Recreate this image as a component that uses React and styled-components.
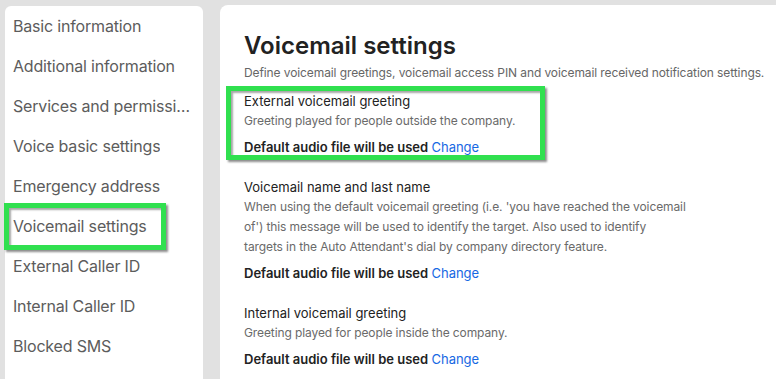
import React from 'react'
import styled, { createGlobalStyle } from 'styled-components'

const Global = createGlobalStyle`
  html, body {
    margin: 0;
    padding: 0;
    background: #e1e1e1;
    font-family: Inter, "Noto Sans", sans-serif;
    overflow: hidden;
  }
`;

const Page = styled.div`
    display: flex;
    align-items: flex-start;
    gap: 17px;
    height: 379px;
    padding: 5px 0 0 5px;
    box-sizing: border-box;
`;

const Sidebar = styled.ul`
    list-style: none;
    margin: 1px 0 0 0;
    padding: 0;
    width: 198px;
    height: 400px;
    background: #fff;
    border-radius: 6px 6px 0 0;
    flex-shrink: 0;
`;

const SideItem = styled.li`
    position: relative;
    height: 40px;
    display: flex;
    align-items: center;
    padding-left: 8px;
    font-size: 16px;
    letter-spacing: -0.18px;
    color: #5c5c5c;
    white-space: nowrap;
`;

const Clip = styled.span`
    display: block;
    max-width: 178px;
    overflow: hidden;
    text-overflow: ellipsis;
`;

const Highlight = styled.span`
    position: absolute;
    left: ${p => p.$left}px;
    top: ${p => p.$top}px;
    width: ${p => p.$w}px;
    height: ${p => p.$h}px;
    border: 5px solid #30e04f;
    box-sizing: border-box;
    box-shadow: 2px 2px 2px rgba(0,0,0,0.45), inset 2px 2px 2px rgba(0,0,0,0.35);
    pointer-events: none;
`;

const Main = styled.main`
    flex: 1;
    height: 400px;
    background: #fff;
    border-radius: 8px 0 0 0;
    padding: 26px 0 0 24px;
    box-sizing: border-box;
`;

const Title = styled.h1`
    margin: 0;
    font-size: 24px;
    font-weight: 600;
    color: #222;
    line-height: 30px;
`;

const Lead = styled.p`
    margin: 4px 0 10px;
    font-size: 12px;
    letter-spacing: -0.1px;
    color: #666;
    line-height: 16px;
    white-space: nowrap;
`;

const Section = styled.section`
    position: relative;
    margin-bottom: 20px;
`;

const Label = styled.div`
    font-size: 13px;
    color: #222;
    line-height: 20px;
`;

const Desc = styled.div`
    font-size: 12px;
    letter-spacing: -0.1px;
    color: #6a6a6a;
    line-height: 20px;
    max-width: 442px;
`;

const Audio = styled.div`
    margin-top: 6px;
    font-size: 13px;
    line-height: 20px;
    font-weight: 600;
    color: #222;
`;

const ChangeLink = styled.a`
    font-weight: 400;
    color: #1668e3;
    text-decoration: none;
    cursor: pointer;
`;

const menu = [
    'Basic information',
    'Additional information',
    'Services and permissions',
    'Voice basic settings',
    'Emergency address',
    'Voicemail settings',
    'External Caller ID',
    'Internal Caller ID',
    'Blocked SMS',
];

const sections = [
    {
        label: 'External voicemail greeting',
        desc: 'Greeting played for people outside the company.',
        marked: true,
    },
    {
        label: 'Voicemail name and last name',
        desc: "When using the default voicemail greeting (i.e. 'you have reached the voicemail of') this message will be used to identify the target. Also used to identify targets in the Auto Attendant's dial by company directory feature.",
    },
    {
        label: 'Internal voicemail greeting',
        desc: 'Greeting played for people inside the company.',
    },
];

export default function App() {
    return (
        <>
            <Global />
            <Page>
                <Sidebar>
                    {menu.map(item => (
                        <SideItem key={item}>
                            <Clip>{item}</Clip>
                            {item === 'Voicemail settings' && (
                                <Highlight $left={-1} $top={-3} $w={162} $h={47} />
                            )}
                        </SideItem>
                    ))}
                </Sidebar>
                <Main>
                    <Title>Voicemail settings</Title>
                    <Lead>Define voicemail greetings, voicemail access PIN and voicemail received notification settings.</Lead>
                    {sections.map(s => (
                        <Section key={s.label}>
                            <Label>{s.label}</Label>
                            <Desc>{s.desc}</Desc>
                            <Audio>
                                Default audio file will be used <ChangeLink>Change</ChangeLink>
                            </Audio>
                            {s.marked && <Highlight $left={-18} $top={-5} $w={319} $h={74} />}
                        </Section>
                    ))}
                </Main>
            </Page>
        </>
    )
}
